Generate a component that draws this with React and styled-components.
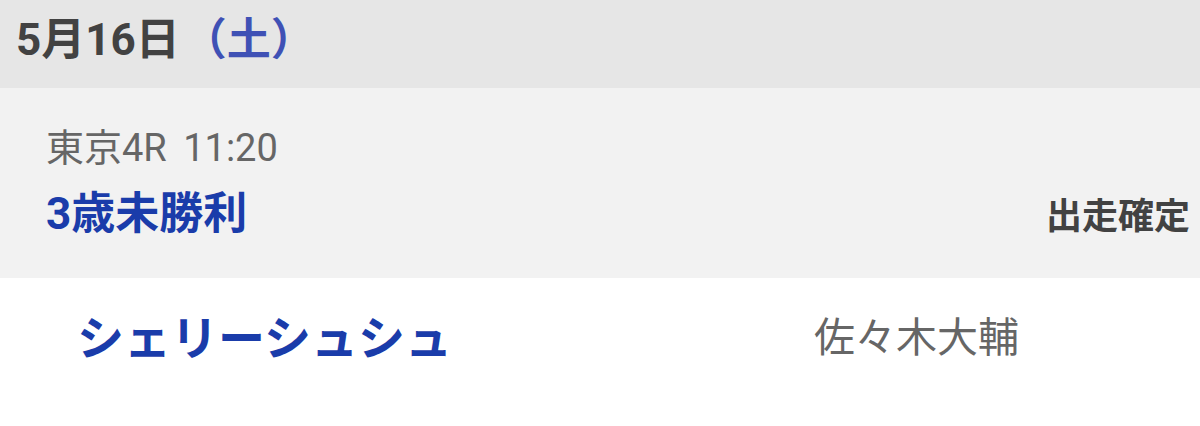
import React from "react";
import styled, { createGlobalStyle } from "styled-components";

const GlobalStyle = createGlobalStyle`
    html, body {
        margin: 0;
        padding: 0;
        background: #ffffff;
    }
    body {
        font-family: Roboto, "Noto Sans CJK JP", sans-serif;
    }
`;

const App = () => {
    return (
        <Page>
            <GlobalStyle />
            <DateBar>
                <DateText>5月16日</DateText>
                <Weekday>（土）</Weekday>
            </DateBar>
            <RaceBlock>
                <RaceInfo>
                    <RaceMeta>
                        東京4R <Time>11:20</Time>
                    </RaceMeta>
                    <RaceName>3歳未勝利</RaceName>
                </RaceInfo>
                <Status>出走確定</Status>
            </RaceBlock>
            <EntryRow>
                <HorseName>シェリーシュシュ</HorseName>
                <Jockey>佐々木大輔</Jockey>
            </EntryRow>
        </Page>
    );
};

export default App;

const Page = styled.div`
    width: 1200px;
    height: 426px;
    background: #ffffff;
    overflow: hidden;
`;

const DateBar = styled.div`
    height: 88px;
    box-sizing: border-box;
    padding: 0 0 8px 16px;
    display: flex;
    align-items: center;
    background-color: #e6e6e6;
`;

const DateText = styled.span`
    font-size: 44px;
    font-weight: 700;
    line-height: 1;
    color: #424242;
`;

const Weekday = styled.span`
    font-size: 44px;
    font-weight: 700;
    line-height: 1;
    color: #3f51b5;
    margin-left: 3px;
`;

const RaceBlock = styled.div`
    height: 190px;
    box-sizing: border-box;
    padding: 0 10px 0 46px;
    display: flex;
    align-items: center;
    justify-content: space-between;
    background-color: #f2f2f2;
`;

const RaceInfo = styled.div`
    display: flex;
    flex-direction: column;
    gap: 20px;
`;

const RaceMeta = styled.div`
    font-size: 38px;
    line-height: 1.1;
    color: #666666;
`;

const Time = styled.span`
    margin-left: 7px;
`;

const RaceName = styled.div`
    font-size: 44px;
    font-weight: 700;
    line-height: 1.1;
    color: #1a3caa;
`;

const Status = styled.div`
    align-self: flex-end;
    margin-bottom: 40px;
    font-size: 36px;
    font-weight: 700;
    line-height: 1.1;
    color: #424242;
`;

const EntryRow = styled.div`
    height: 120px;
    display: grid;
    grid-template-columns: 1fr 386px;
    align-items: center;
    padding-left: 77px;
`;

const HorseName = styled.div`
    font-size: 47px;
    font-weight: 700;
    line-height: 1;
    color: #1a3caa;
`;

const Jockey = styled.div`
    font-size: 41px;
    line-height: 1;
    color: #666666;
`;
